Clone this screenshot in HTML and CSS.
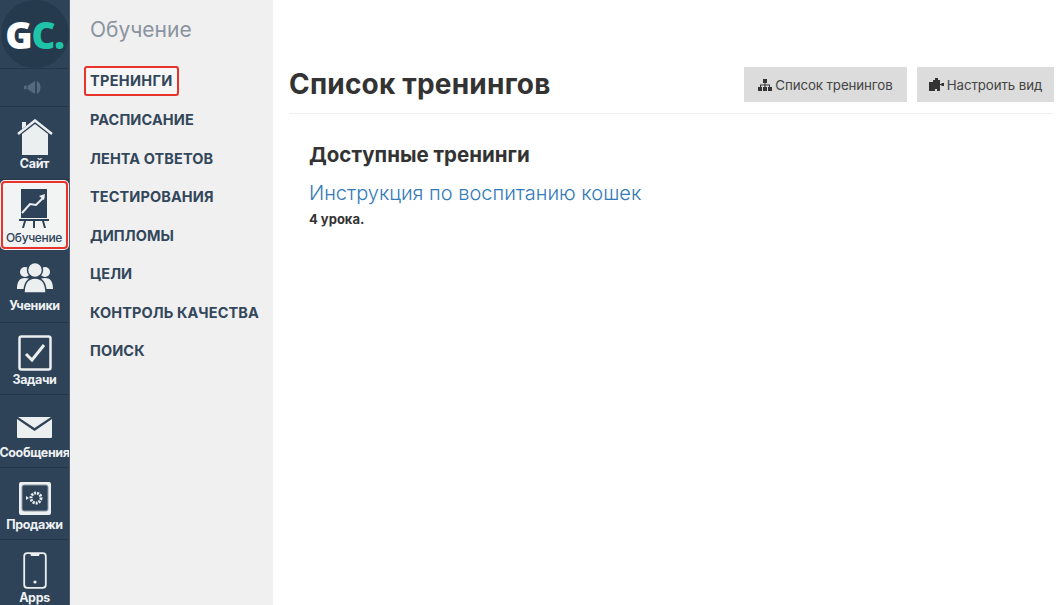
FILE: index.html
```html
<!DOCTYPE html>
<html lang="ru">
<head>
<meta charset="utf-8">
<title>Список тренингов</title>
<link rel="stylesheet" href="styles.css">
</head>
<body>
<div class="app">
  <aside class="rail">
    <div class="logo"><div class="logo-disc"><span class="logo-g">G</span><span class="logo-c">C.</span></div></div>
    <div class="mute">
      <svg width="22" height="15" viewBox="0 0 24 16"><path fill="#56697e" d="M0 6h3v4H0zM4 6l8-5v14l-8-5zM14 1c3 1 4 4 4 7s-1 6-4 7z"/></svg>
    </div>
    <a class="rail-item h73 site">
      <svg class="ri" width="36" height="36" viewBox="0 0 36 36"><path fill="#eceff0" d="M5 36V15L18 5l13 10v21z"/><path fill="none" stroke="#eceff0" stroke-width="2.500" d="M1 15 18 1.500 35 15"/><path fill="#eceff0" d="M5 3h4v4l-4 3z"/></svg>
      <span>Сайт</span>
    </a>
    <a class="rail-item active">
      <svg class="ri" width="30" height="40" viewBox="0 0 30 40"><path fill="#2f4358" d="M2 0h26v29H2z"/><path fill="none" stroke="#eceff0" stroke-width="2" d="M3 24l8-9 6 1 8-8"/><path fill="#eceff0" d="m26 5-1 6-5-4z"/><path fill="#2f4358" d="M0 30h30v2H0zM5 32h2l-2 7H3zM14 32h2v7h-2zM23 32h2l2 7h-2z"/></svg>
      <span>Обучение</span>
    </a>
    <a class="rail-item h73 people">
      <svg class="ri" width="38" height="34" viewBox="0 0 38 34"><g fill="#eceff0"><circle cx="9" cy="11" r="5"/><circle cx="29" cy="11" r="5"/><path d="M1 28c0-8 3-11 8-11s8 3 8 11zM21 28c0-8 3-11 8-11s8 3 8 11z"/></g><g fill="#eceff0" stroke="#2f4358" stroke-width="1.500"><circle cx="19" cy="9" r="7.500"/><path d="M8 32c0-11 4-15 11-15s11 4 11 15z"/></g></svg>
      <span>Ученики</span>
    </a>
    <a class="rail-item h72">
      <svg class="ri" width="34" height="36" viewBox="0 0 34 36"><rect x="1.500" y="1.500" width="31" height="33" rx="2" fill="none" stroke="#eceff0" stroke-width="2.500"/><path fill="none" stroke="#eceff0" stroke-width="3" d="m8 19 6 6L26 10"/></svg>
      <span>Задачи</span>
    </a>
    <a class="rail-item h73 mail">
      <svg class="ri" width="35" height="21" viewBox="0 0 35 21"><path fill="#eceff0" d="M1 0h33L17.500 11zM0 2l17.500 12L35 2v18a1 1 0 0 1-1 1H1a1 1 0 0 1-1-1z"/></svg>
      <span>Сообщения</span>
    </a>
    <a class="rail-item h72">
      <svg class="ri" width="34" height="35" viewBox="0 0 34 35"><rect x="1" y="1" width="32" height="33" rx="2" fill="#eceff0"/><rect x="4" y="4" width="26" height="26" rx="2" fill="#2f4358" stroke="#8b98a6"/><circle cx="18" cy="17" r="5" fill="none" stroke="#eceff0" stroke-width="3" stroke-dasharray="2 1"/><path fill="#eceff0" d="M8 15l3 2-3 2z"/></svg>
      <span>Продажи</span>
    </a>
    <a class="rail-item apps">
      <svg class="ri" width="24" height="37" viewBox="0 0 24 37"><rect x="1.200" y="1.200" width="21.600" height="34.600" rx="3" fill="none" stroke="#eceff0" stroke-width="1.800"/><path fill="#eceff0" d="M7 1h10l-1 3H8z"/><circle cx="12" cy="30" r="1.600" fill="#eceff0"/></svg>
      <span>Apps</span>
    </a>
  </aside>

  <nav class="subnav">
    <div class="subnav-title">Обучение</div>
    <ul class="subnav-list">
      <li><a class="current">ТРЕНИНГИ</a></li>
      <li><a>РАСПИСАНИЕ</a></li>
      <li><a>ЛЕНТА ОТВЕТОВ</a></li>
      <li><a>ТЕСТИРОВАНИЯ</a></li>
      <li><a>ДИПЛОМЫ</a></li>
      <li><a>ЦЕЛИ</a></li>
      <li><a>КОНТРОЛЬ КАЧЕСТВА</a></li>
      <li><a>ПОИСК</a></li>
    </ul>
  </nav>

  <main class="main">
    <header class="head">
      <h1>Список тренингов</h1>
      <div class="actions">
        <a class="btn w163">
          <svg width="14" height="12" viewBox="0 0 14 12"><path fill="#333" d="M5 0h4v4H7.500v1.500H12V8h2v4h-4V8h1V6.500H7.500V8H9v4H5V8h1.500V6.500H3V8h1v4H0V8h2V5.500h4.500V4H5z"/></svg>
          Список тренингов
        </a>
        <a class="btn w137">
          <svg width="15" height="13" viewBox="0 0 15 13"><path fill="#333" d="M4 2h2V0h3v2h2v4h1.500V5H15v3h-2.500V7H11v6H8v-2H6v2H0V4h4z"/></svg>
          Настроить вид
        </a>
      </div>
    </header>
    <section class="content">
      <h2>Доступные тренинги</h2>
      <a class="training">Инструкция по воспитанию кошек</a>
      <div class="lessons">4 урока.</div>
    </section>
  </main>
</div>
</body>
</html>
```
FILE: styles.css
```css
* { box-sizing: border-box; }
html, body { margin: 0; height: 100%; }
body { background: #fff; font-family: "Inter", "Noto Sans", sans-serif; overflow: hidden; }
.app { display: flex; height: 605px; }

.rail { width: 70px; flex: none; background: #2f4358; border-right: 1px solid #4a5b6e; display: flex; flex-direction: column; overflow: hidden; }
.logo { height: 69px; display: flex; justify-content: center; align-items: center; border-bottom: 1px solid #263748; }
.logo-disc { width: 68px; height: 68px; border-radius: 50%; background: #263a4d; display: flex; justify-content: center; align-items: center; font: 800 37px/1 "Open Sans", sans-serif; letter-spacing: -1.200px; }
.logo-g { color: #fff; }
.logo-c { color: #1fc4a8; }
.mute { height: 38px; display: flex; justify-content: center; align-items: center; border-bottom: 1px solid #263748; }
.rail-item { display: flex; flex-direction: column; align-items: center; justify-content: flex-end; color: #eef1f3; font-size: 12.500px; font-weight: 700; letter-spacing: -.35px; line-height: 14px; white-space: nowrap; border-bottom: 1px solid #263748; padding-bottom: 7px; gap: 2px; }
.h73 { height: 73px; }
.h72 { height: 72px; }
.site { padding-bottom: 8px; }
.people { padding-bottom: 9px; }
.people .ri { margin-bottom: 2px; }
.mail .ri { margin-bottom: 6px; }
.active { height: 70px; background: #f2f3f3; color: #2f4358; font-weight: 500; font-size: 12px; outline: 2px solid #e8332a; outline-offset: -3px; border-radius: 5px; border-bottom: 0; padding: 0 1px 5px 0; }
.apps { height: 65px; border-bottom: 0; padding-bottom: 0; }
.ri { flex: none; }

.subnav { width: 203px; flex: none; background: #f0f0f0; padding: 16px 0 0 20px; }
.subnav-title { font-size: 21px; line-height: 28px; color: #8a94a0; font-weight: 400; }
.subnav-list { list-style: none; margin: 18px 0 0; padding: 0; }
.subnav-list li { height: 38.500px; display: flex; align-items: center; }
.subnav-list a { font-size: 14.500px; font-weight: 700; color: #33475b; white-space: nowrap; letter-spacing: .1px; }
.subnav-list .current { border: 2px solid #e8332a; border-radius: 3px; background: #f6f6f6; margin: 0 0 0 -6px; padding: 0 4px; height: 30px; line-height: 26px; width: 95px; letter-spacing: .3px; }

.main { flex: 1; min-width: 0; padding: 67px 6px 0 16px; }
.head { display: flex; justify-content: space-between; align-items: flex-start; border-bottom: 1px solid #eee; height: 47px; }
h1 { margin: 0; font-size: 28px; line-height: 35px; font-weight: 700; color: #333; letter-spacing: .2px; }
.actions { display: flex; gap: 10px; }
.btn { height: 35px; background: #dcdcdc; color: #444; font-size: 13.300px; display: flex; align-items: center; justify-content: center; gap: 3px; white-space: nowrap; letter-spacing: -.1px; }
.w163 { width: 163px; }
.w137 { width: 137px; }
.content { padding: 28px 0 0 20px; }
h2 { margin: 0; font-size: 20.500px; line-height: 26px; font-weight: 700; color: #333; }
.training { display: block; margin-top: 12px; font-size: 20px; line-height: 26px; font-weight: 300; color: #337ab7; }
.lessons { margin-top: 5px; font-size: 13px; line-height: 16px; font-weight: 700; color: #333; }
```
